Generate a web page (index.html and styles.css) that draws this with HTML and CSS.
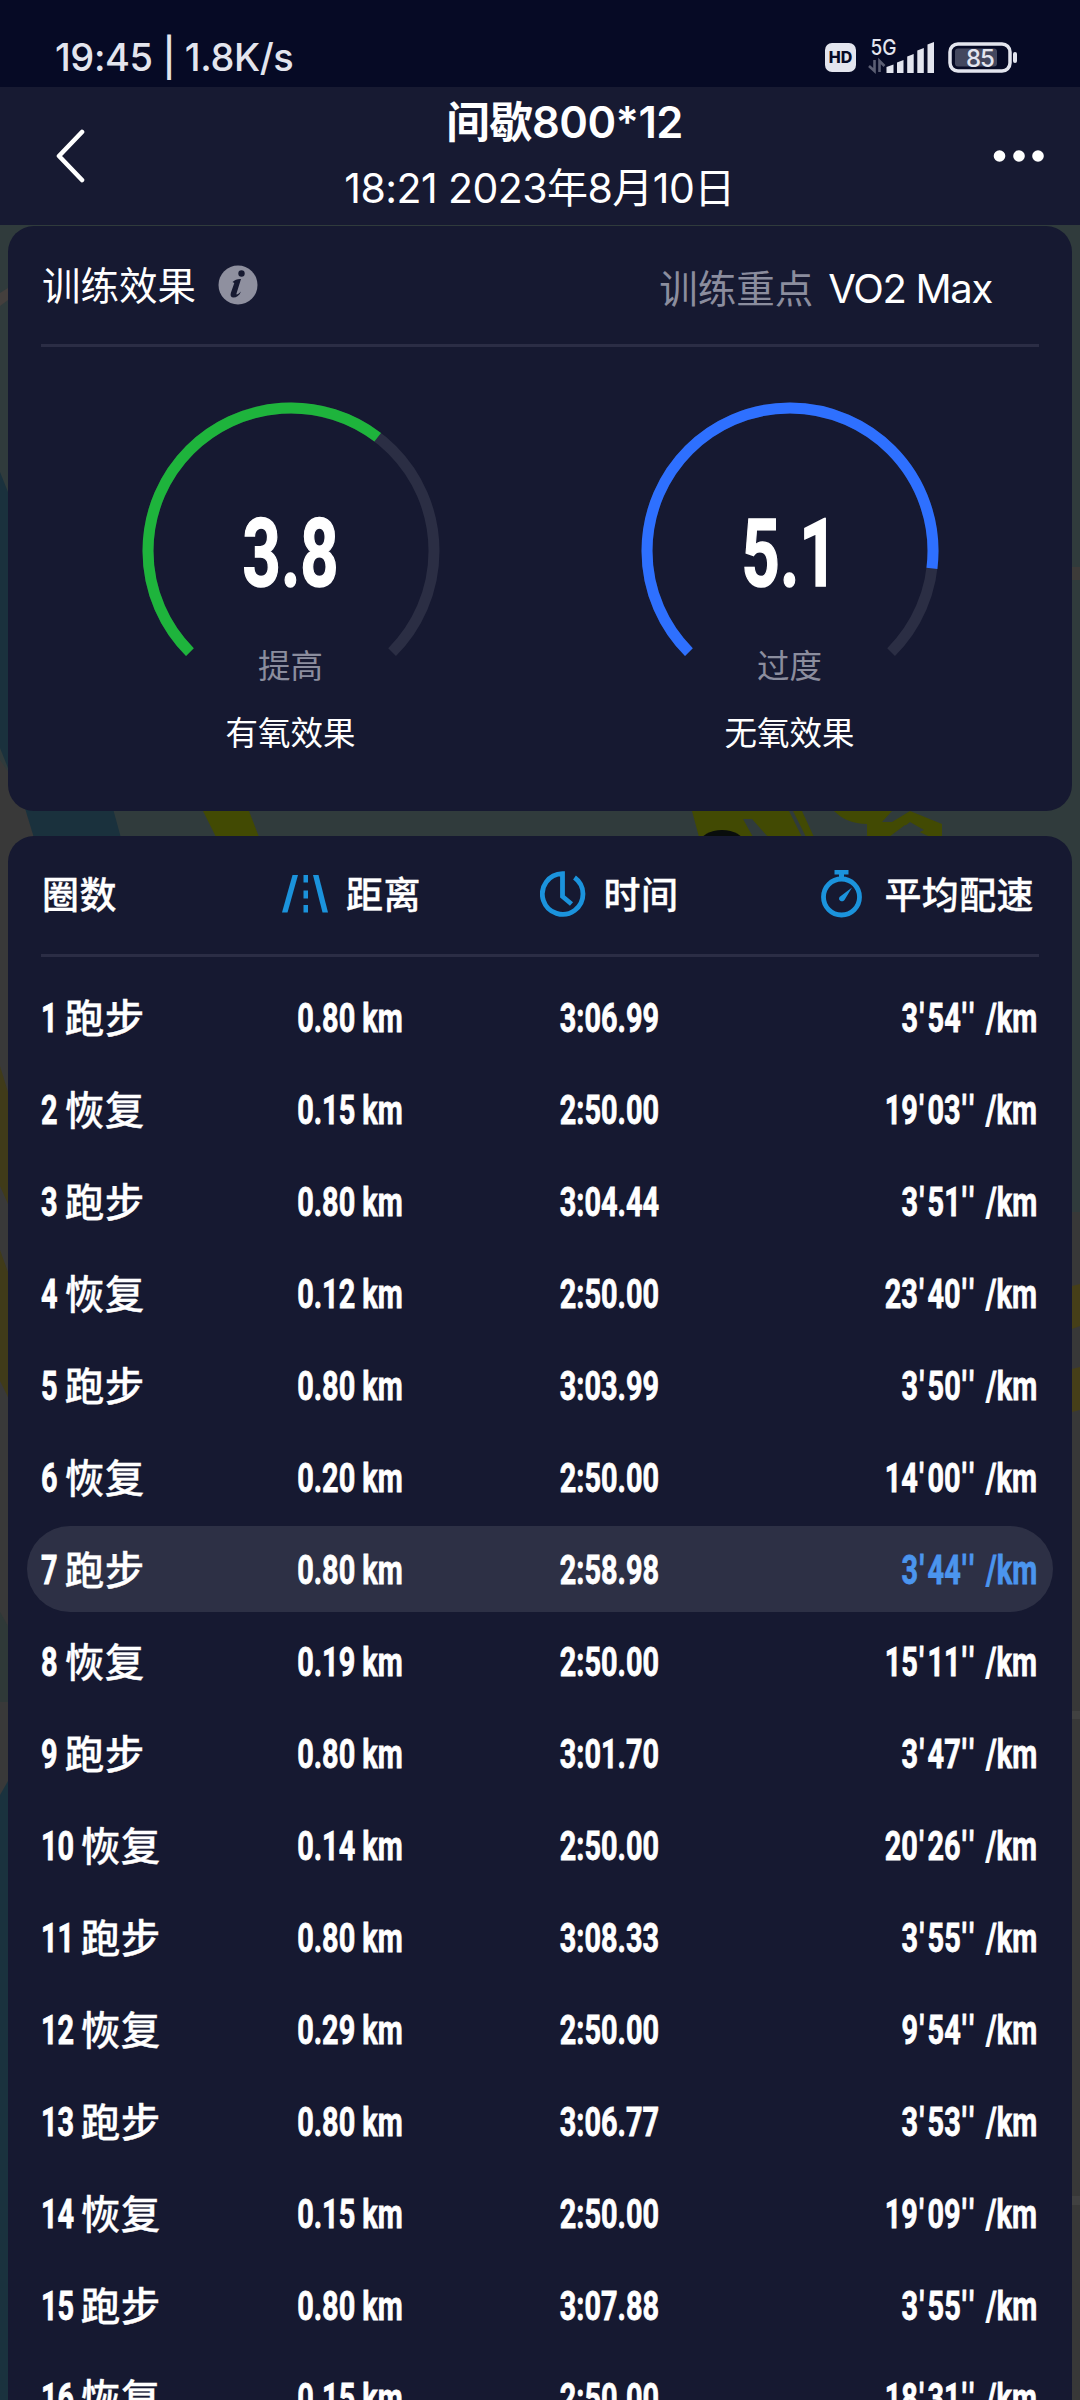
FILE: index.html
```html
<!DOCTYPE html>
<html lang="zh-CN">
<head>
    <meta charset="UTF-8">
    <meta name="viewport" content="width=device-width, initial-scale=1.0">
    <title>间歇800*12</title>
    <link rel="stylesheet" href="styles.css">
</head>
<body>
    <!-- dimmed map behind the cards -->
    <svg class="map" width="1080" height="2400" viewBox="0 0 1080 2400">
        <rect width="1080" height="2400" fill="#303b3c"/>
        <path d="M0 760L36 812V2400H0z" fill="#393939"/>
        <path d="M0 293l8-5v12l-8 6z" fill="#443f3d"/>
        <path d="M0 472L8 492V768L0 748z" fill="#1a313d"/>
        <path d="M24 805h88l9 33H34z" fill="#1a313d"/>
        <path d="M203 811h46l10 26h-43z" fill="#424a03"/>
        <path d="M0 1066l8 26v112l-8-18zM0 1250l8 22v125l-8-16z" fill="#403b19"/>
        <path d="M0 1612l8 14v76H0z" fill="#2f3938"/>
        <path d="M0 1795l8-14v619H0z" fill="#1a323e"/>
        <path d="M692 811h97l13 26h-34l-16-18h-9l10 18h-54zM793 811h9l12 26h-8zM834 811h58l-10 11h10l18-11 32 13v13h-12l-25-12-16 12h-22v-13c-14 0-25-5-33-13z" fill="#424a03"/>
        <path d="M891 837l19-15 14 8-14 7z" fill="#303b3c"/>
        <ellipse cx="722" cy="843" rx="22" ry="13" fill="#090d0c"/>
        <path d="M1064 567h16v13h-16z" fill="#3d3b39"/>
        <path d="M1064 1212h16v1188h-16z" fill="#383838"/>
        <path d="M1064 1288l16-4v42l-16 6zM1064 1371l16-4v43l-16 4z" fill="#463f18"/>
        <path d="M1064 1711h16v8h-16zM1064 2196h16v9h-16z" fill="#414141"/>
    </svg>

    <div class="screen">
        <div class="statusbar">
            <span class="clock">19:45 | 1.8K/s</span>
            <div class="status-icons">
                <span class="hd">HD</span>
                <svg class="signal" width="68" height="38" viewBox="0 0 68 38">
                    <text x="2.500" y="19" class="net" textLength="26" lengthAdjust="spacingAndGlyphs">5G</text>
                    <g stroke="#5b5e73" stroke-width="2.600" fill="none"><path d="M6.500 24v11L1 30M11.500 36V25l5 5"/></g>
                    <g fill="#e3e5ee">
                        <path d="M18.500 31l7-2.500v8.500h-7z"/>
                        <path d="M29 26.500l6.500-2.500v13H29z"/>
                        <path d="M39.200 20.500l6.500-2.500v19h-6.500z"/>
                        <path d="M49.300 14.500l6.500-2.500v25h-6.500z"/>
                        <path d="M59.500 8.500L66 6v31h-6.500z"/>
                    </g>
                </svg>
                <svg class="battery" width="70" height="32" viewBox="0 0 70 32">
                    <rect x="2" y="2" width="60" height="27" rx="8" fill="none" stroke="#e3e5ee" stroke-width="3.500"/>
                    <rect x="7" y="6.500" width="42" height="18" rx="3" fill="#43475e"/>
                    <rect x="65" y="10" width="4" height="11" rx="2" fill="#e3e5ee"/>
                    <text x="32" y="24.500" class="level" text-anchor="middle">85</text>
                </svg>
            </div>
        </div>

        <header class="topbar">
            <svg class="back" width="32" height="56" viewBox="0 0 32 56">
                <path d="M29 4L6 28l23 24" fill="none" stroke="#fff" stroke-width="4.600" stroke-linecap="round" stroke-linejoin="round"/>
            </svg>
            <div class="titles">
                <h1>间歇800*12</h1>
                <p>18:21 2023年8月10日</p>
            </div>
            <svg class="more" width="52" height="14" viewBox="0 0 52 14">
                <g fill="#fff"><circle cx="7.500" cy="7" r="5.800"/><circle cx="27" cy="7" r="5.800"/><circle cx="46" cy="7" r="5.800"/></g>
            </svg>
        </header>

        <section class="card effect">
            <div class="effect-head">
                <h2>训练效果</h2>
                <svg class="info" width="40" height="40" viewBox="0 0 40 40">
                    <circle cx="20" cy="20" r="19.500" fill="#8f909f"/>
                    <circle cx="23.500" cy="8.500" r="3.200" fill="#171a31"/>
                    <path d="M14.500 17c2.500-2 5-3.300 8.500-3l-4.500 14.500c-.5 1.800 1.500 1 4.500-2-1.500 4-4.500 6-7.500 6-2.500 0-3.500-1.700-2.700-4.500l3.500-10z" fill="#171a31"/>
                </svg>
                <div class="focus"><span>训练重点</span> VO2 Max</div>
            </div>
            <div class="gauges">
                <div class="gauge">
                    <svg width="298" height="256" viewBox="0 0 298 256">
                        <path class="track" d="M47.900 250.100A143 143 0 1 1 250.100 250.100" pathLength="270"/>
                        <path class="arc aerobic" d="M47.900 250.100A143 143 0 1 1 250.100 250.100" pathLength="270" stroke-dasharray="172.300 400"/>
                    </svg>
                    <div class="score"><span>3.8</span></div>
                    <div class="level-name">提高</div>
                    <div class="gauge-name">有氧效果</div>
                </div>
                <div class="gauge">
                    <svg width="298" height="256" viewBox="0 0 298 256">
                        <path class="track" d="M47.900 250.100A143 143 0 1 1 250.100 250.100" pathLength="270"/>
                        <path class="arc anaerobic" d="M47.900 250.100A143 143 0 1 1 250.100 250.100" pathLength="270" stroke-dasharray="232 400"/>
                    </svg>
                    <div class="score"><span>5.1</span></div>
                    <div class="level-name">过度</div>
                    <div class="gauge-name">无氧效果</div>
                </div>
            </div>
        </section>

        <section class="card laps">
            <div class="laps-head">
                <div>圈数</div>
                <div class="center distance">
                    <svg width="46" height="38" viewBox="0 0 46 38">
                        <g fill="#1b93dc">
                            <path d="M10.500 0h5.500L5.500 37.500H0z"/>
                            <path d="M31 0h5.500l9.500 37.500h-5.500z"/>
                            <path d="M21.500 0h4.500v7.500h-4.500zM21.500 15.500h4.500v8h-4.500zM21.500 30h4.500v7.500h-4.500z"/>
                        </g>
                    </svg>
                    <span>距离</span>
                </div>
                <div class="center">
                    <svg width="46" height="46" viewBox="0 0 46 46">
                        <path d="M34.500 6.500A20.300 20.300 0 1 1 22.500 2.700V25.500L31.500 33" fill="none" stroke="#1b93dc" stroke-width="4.800"/>
                    </svg>
                    <span>时间</span>
                </div>
                <div class="right">
                    <svg width="42" height="48" viewBox="0 0 42 48">
                        <circle cx="20.500" cy="27" r="18" fill="none" stroke="#1b93dc" stroke-width="4.800"/>
                        <path d="M13.500 0h14v4.500h-4.500v5h-5v-5h-4.500zM31 17.500l-7.500 12.500c-2 3-7 .5-5-3z" fill="#1b93dc"/>
                    </svg>
                    <span>平均配速</span>
                </div>
            </div>
            <div class="rows" id="rows"></div>
        </section>
    </div>

    <script>
        const laps = [
            ['跑步', '0.80', '3:06.99', 3, 54],
            ['恢复', '0.15', '2:50.00', 19, 3],
            ['跑步', '0.80', '3:04.44', 3, 51],
            ['恢复', '0.12', '2:50.00', 23, 40],
            ['跑步', '0.80', '3:03.99', 3, 50],
            ['恢复', '0.20', '2:50.00', 14, 0],
            ['跑步', '0.80', '2:58.98', 3, 44],
            ['恢复', '0.19', '2:50.00', 15, 11],
            ['跑步', '0.80', '3:01.70', 3, 47],
            ['恢复', '0.14', '2:50.00', 20, 26],
            ['跑步', '0.80', '3:08.33', 3, 55],
            ['恢复', '0.29', '2:50.00', 9, 54],
            ['跑步', '0.80', '3:06.77', 3, 53],
            ['恢复', '0.15', '2:50.00', 19, 9],
            ['跑步', '0.80', '3:07.88', 3, 55],
            ['恢复', '0.15', '2:50.00', 18, 31]
        ];
        const fastest = 7;
        const rows = document.getElementById('rows');

        laps.forEach(([type, distance, time, min, sec], i) => {
            const n = i + 1;
            const ss = String(sec).padStart(2, '0');
            const row = document.createElement('div');
            row.className = n === fastest ? 'row best' : 'row';
            row.innerHTML = `
                <div class="lap"><span class="num ${n > 9 ? 'two' : ''}">${n}</span><span class="type">${type}</span></div>
                <div class="center"><span class="num dist">${distance} km</span></div>
                <div class="center"><span class="num time">${time}</span></div>
                <div class="right"><span class="num pace">${min}<span class="tick">'</span>${ss}<span class="tick">''</span> /km</span></div>
            `;
            rows.appendChild(row);
        });
    </script>
</body>
</html>
```
FILE: styles.css
```css
* {
    box-sizing: border-box;
}

body {
    margin: 0;
    width: 1080px;
    height: 2400px;
    overflow: hidden;
    position: relative;
    background: #303b3c;
    color: #fff;
    font-family: Inter, "Noto Sans CJK SC", sans-serif;
}

h1, h2, p {
    margin: 0;
}

.map {
    position: absolute;
    top: 0;
    left: 0;
}

.screen {
    position: relative;
    display: flex;
    flex-direction: column;
    height: 2400px;
    overflow: hidden;
}

.statusbar {
    flex: none;
    height: 87px;
    padding: 28px 62px 0 55px;
    display: flex;
    justify-content: space-between;
    align-items: flex-start;
    background: #060a25;
    color: #e3e5ee;
}

.clock {
    font-size: 38px;
    font-weight: 500;
    line-height: 58px;
    letter-spacing: -0.4px;
    white-space: nowrap;
}

.status-icons {
    display: flex;
    align-items: flex-start;
}

.hd {
    width: 31px;
    height: 29px;
    margin: 15px 12px 0 0;
    border-radius: 7px;
    background: #e3e5ee;
    color: #060a25;
    font-size: 16px;
    font-weight: 800;
    line-height: 29px;
    text-align: center;
}

.signal {
    margin-top: 8px;
}

.net {
    font-size: 21px;
    font-weight: 500;
    fill: #e3e5ee;
}

.battery {
    margin: 14px 0 0 12px;
}

.level {
    font-size: 24px;
    font-weight: 500;
    letter-spacing: -1px;
    fill: #e3e5ee;
}

.topbar {
    flex: none;
    height: 138px;
    padding: 0 36px 0 53px;
    display: flex;
    align-items: center;
    justify-content: space-between;
    background: #171a32;
}

.titles {
    display: flex;
    flex-direction: column;
    align-items: center;
    white-space: nowrap;
}

.titles h1 {
    margin-left: 52px;
    font-size: 43.5px;
    font-weight: 600;
    line-height: 64px;
    letter-spacing: -0.6px;
}

.titles p {
    margin-left: 2px;
    font-size: 41px;
    line-height: 68px;
    letter-spacing: -0.55px;
}

.card {
    flex: none;
    margin: 0 8px;
    padding: 0 33px;
    border-radius: 26px;
    background: #161931;
}

.effect {
    height: 585px;
    margin-top: 1px;
    margin-bottom: 25px;
}

.effect-head {
    display: flex;
    align-items: center;
    height: 121px;
    padding-right: 47px;
    border-bottom: 3px solid #2b2d45;
}

.effect-head h2 {
    margin: -4px 22px 0 1px;
    font-size: 38.5px;
    font-weight: 400;
}

.focus {
    margin: 2px 0 0 auto;
    font-size: 40px;
    letter-spacing: -1.3px;
    white-space: nowrap;
}

.focus span {
    margin-right: 5px;
    font-size: 38.5px;
    letter-spacing: 0;
    color: #8b8d9e;
}

.gauges {
    display: flex;
}

.gauge {
    flex: 1;
    display: flex;
    flex-direction: column;
    align-items: center;
    padding-top: 55px;
}

.track, .arc {
    fill: none;
    stroke-width: 11;
}

.track {
    stroke: #2b2e44;
}

.aerobic {
    stroke: #1eb43c;
}

.anaerobic {
    stroke: #2e70ff;
}

.score {
    height: 100px;
    margin-top: -154px;
    font-family: Roboto, sans-serif;
    font-size: 94px;
    font-weight: 700;
    line-height: 100px;
}

.score span {
    display: inline-block;
    transform: scaleX(0.71);
    -webkit-text-stroke: 1.5px #fff;
}

.level-name {
    margin-top: 38px;
    font-size: 32.5px;
    line-height: 50px;
    color: #8b8d9e;
}

.gauge-name {
    margin-top: 17px;
    font-size: 32.5px;
    line-height: 50px;
}

.laps {
    height: 1700px;
}

.laps-head, .row {
    display: grid;
    grid-template-columns: 160px 296px 222px 1fr;
    align-items: center;
}

.laps-head {
    height: 121px;
    margin-bottom: 17px;
    padding: 0 5px 2px 1px;
    border-bottom: 3px solid #2b2d45;
    font-size: 37px;
    font-weight: 500;
    letter-spacing: 0.4px;
    -webkit-text-stroke: 0.3px #fff;
}

.laps-head > div {
    display: flex;
    align-items: center;
    gap: 18px;
    white-space: nowrap;
}

.laps-head .right {
    gap: 21px;
}

.laps-head .distance {
    padding-left: 3px;
}

.laps-head > div:first-child,
.laps-head span {
    margin-top: -2px;
}

.center {
    display: flex;
    justify-content: center;
}

.right {
    display: flex;
    justify-content: flex-end;
}

.row {
    height: 86px;
    margin: 0 -14px 6px;
    padding: 0 16px 0 15px;
    border-radius: 43px;
    white-space: nowrap;
}

.best {
    background: #2d3045;
}

.best .pace {
    color: #4b95ee;
}

.lap {
    display: flex;
    align-items: center;
    font-size: 39.5px;
    font-weight: 500;
}

.type {
    margin-top: -4px;
    letter-spacing: 0.5px;
    -webkit-text-stroke: 0.3px #fff;
}

/* condensed digits */
.num {
    display: inline-block;
    font-family: Roboto, sans-serif;
    font-size: 41.5px;
    font-weight: 700;
    transform: scaleX(0.695);
    -webkit-text-stroke: 0.8px currentColor;
}

.lap .num {
    transform-origin: left;
    margin-left: -1px;
}

.lap .num.two {
    margin-right: -8px;
}

.num.pace {
    transform-origin: right;
    word-spacing: 2px;
}

.tick {
    margin-left: 2px;
    letter-spacing: 5px;
}
```
